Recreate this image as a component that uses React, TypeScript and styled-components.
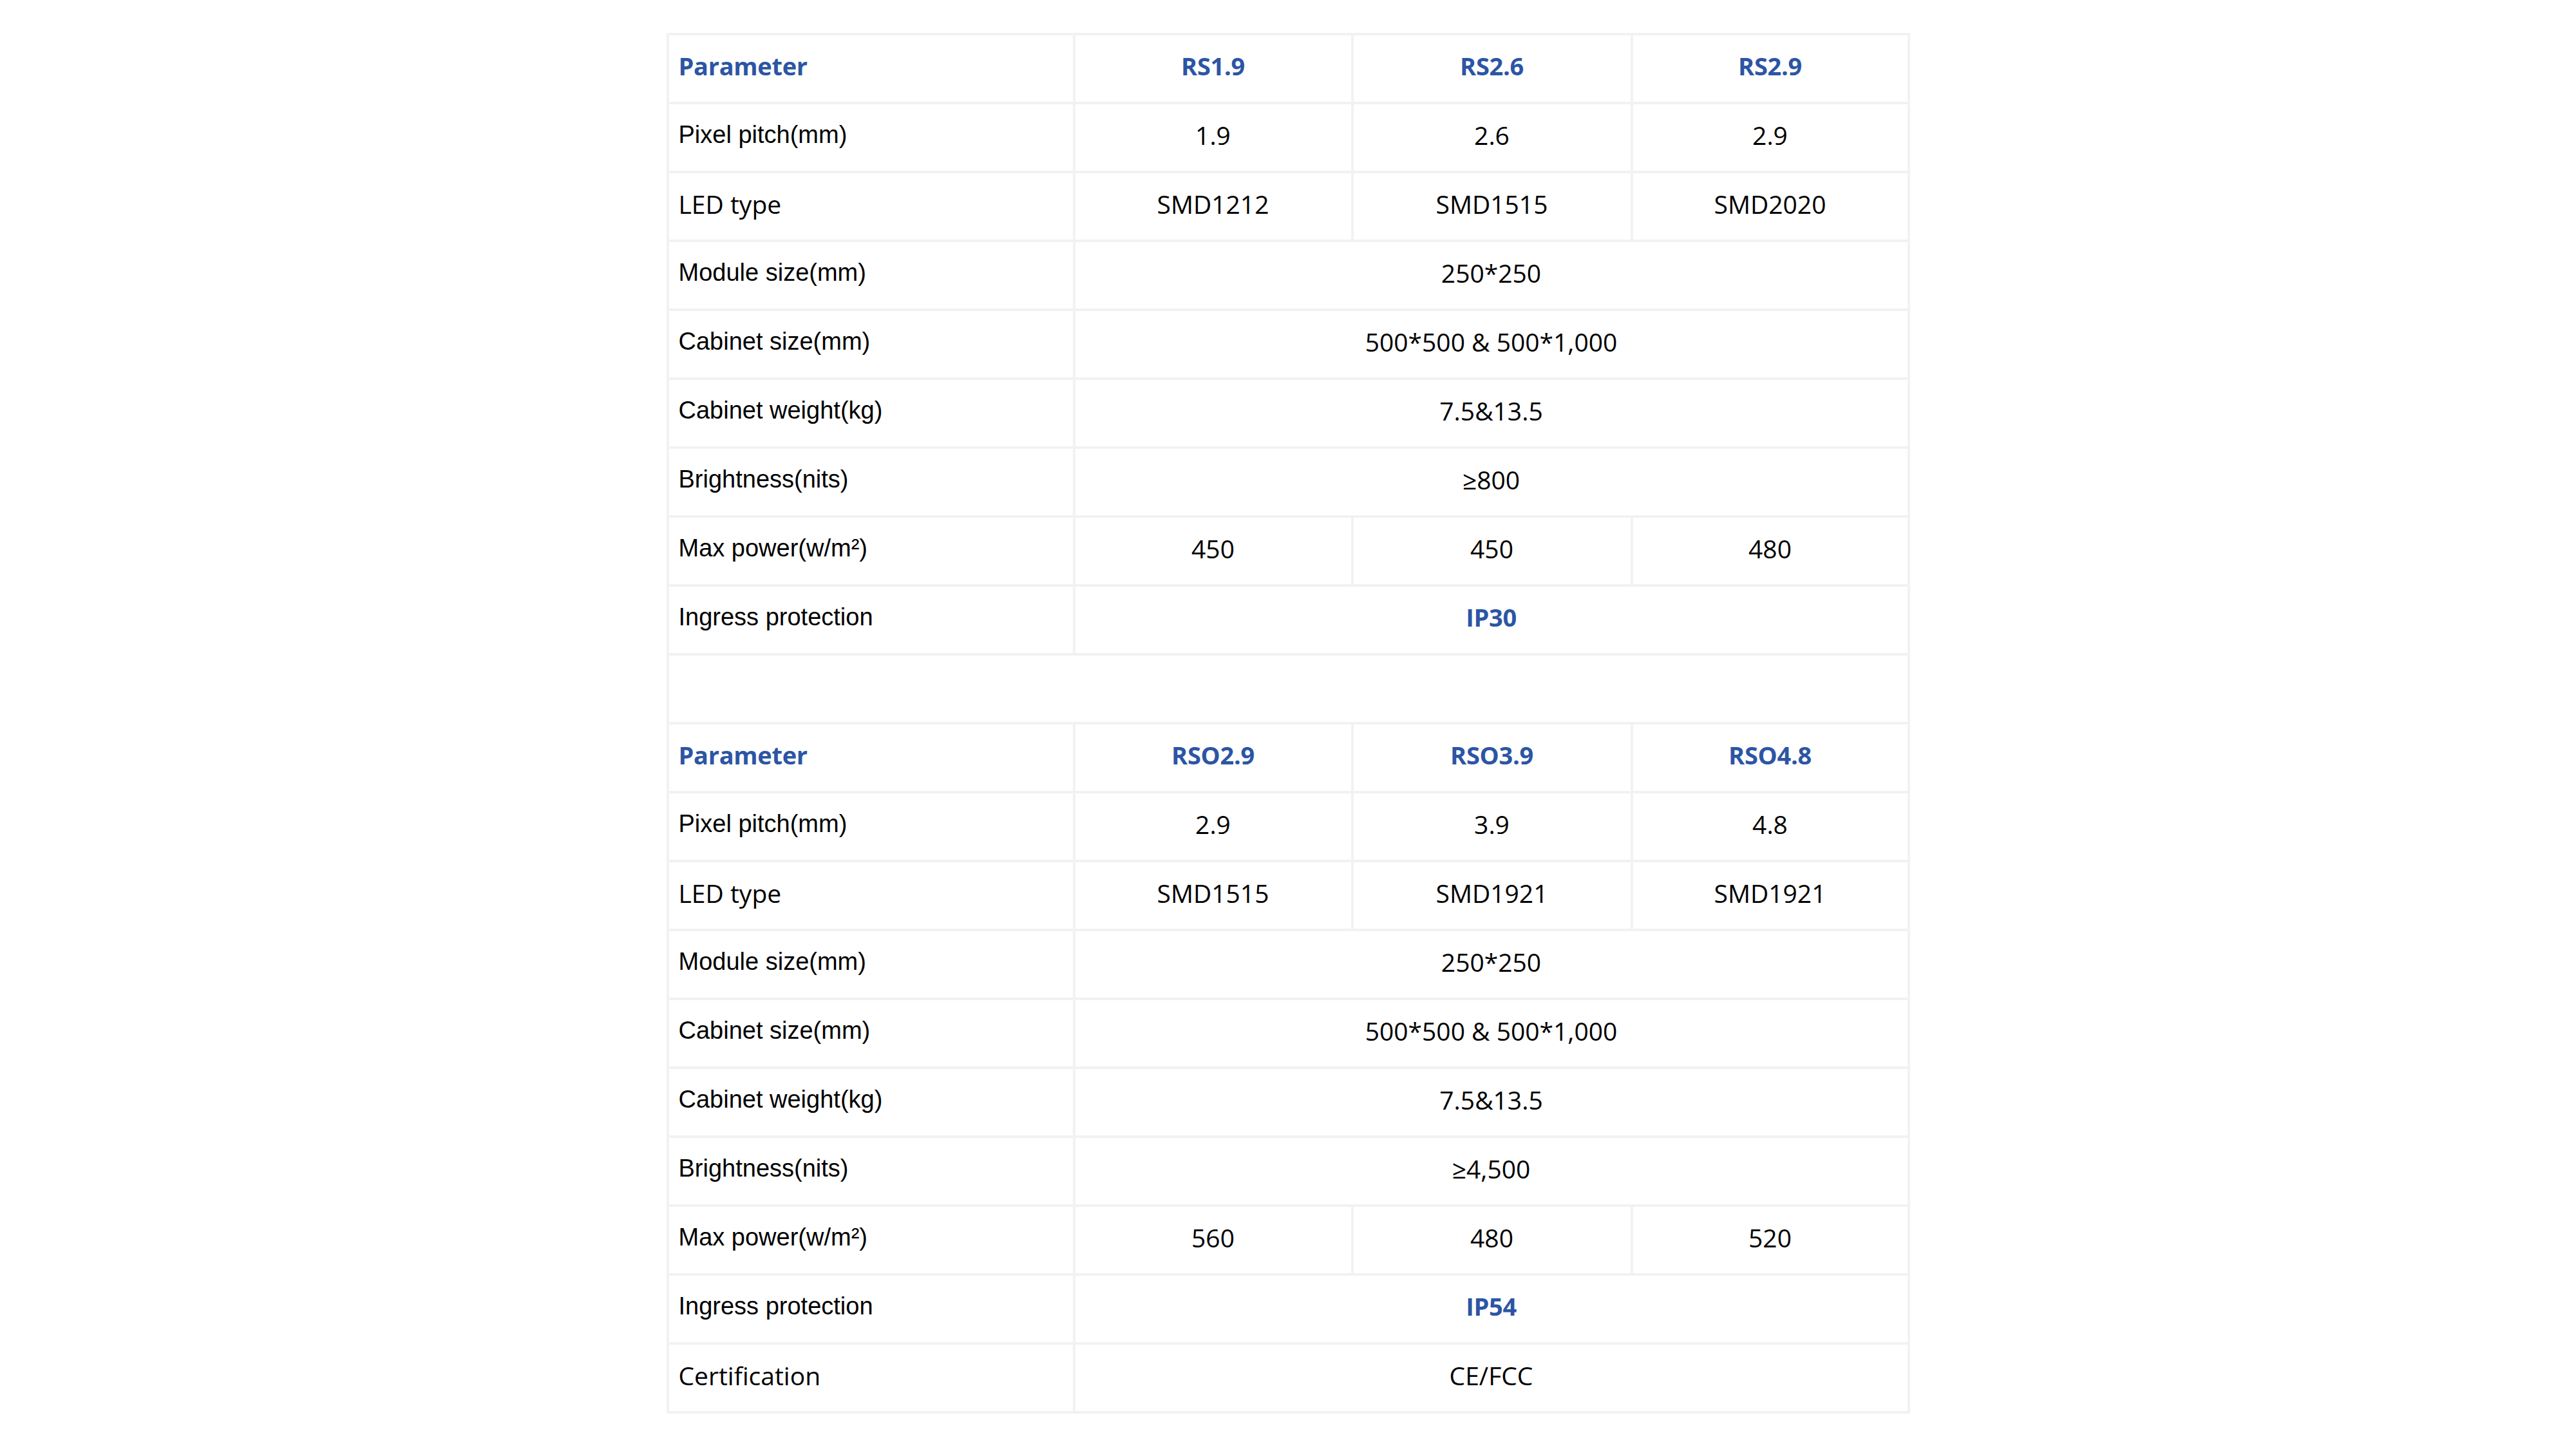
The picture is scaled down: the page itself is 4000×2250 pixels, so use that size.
import React from 'react';
import styled, { createGlobalStyle } from 'styled-components';

const GlobalStyle = createGlobalStyle`
  html, body {
    margin: 0;
    padding: 0;
    background: #ffffff;
  }
`;

const Page = styled.main`
  display: flex;
  justify-content: center;
  align-items: flex-start;
  box-sizing: border-box;
  min-height: 2250px;
  padding-top: 51px;
  background: #ffffff;
`;

const SpecTable = styled.table`
  border-collapse: collapse;
  table-layout: fixed;
  width: 1927px;
`;

const Col = styled.col<{ $w: number }>`
  width: ${(p) => p.$w}px;
`;

const Row = styled.tr`
  height: 107px;
`;

type Font = 'arial' | 'segoe';

const Cell = styled.td<{ $center?: boolean; $font?: Font; $accent?: boolean }>`
  border: 4px solid #f2f2f2;
  padding: 0 15px 7px;
  vertical-align: middle;
  text-align: ${(p) => (p.$center ? 'center' : 'left')};
  font-family: ${(p) =>
    p.$font === 'arial'
      ? '"Liberation Sans", Arial, sans-serif'
      : '"Open Sans", "Noto Sans", sans-serif'};
  font-size: ${(p) => (p.$font === 'arial' ? '38px' : p.$accent ? '38px' : '39px')};
  font-weight: ${(p) => (p.$accent ? 700 : 400)};
  letter-spacing: ${(p) => (p.$accent ? '-0.3px' : '0')};
  color: ${(p) => (p.$accent ? '#2c55a4' : '#000000')};
  white-space: nowrap;
  line-height: 1.2;
`;

type SpecRow = {
  label: string;
  font: Font;
  values: string[];
  accent?: boolean;
};

type Section = {
  models: string[];
  rows: SpecRow[];
};

const sections: Section[] = [
  {
    models: ['RS1.9', 'RS2.6', 'RS2.9'],
    rows: [
      { label: 'Pixel pitch(mm)', font: 'arial', values: ['1.9', '2.6', '2.9'] },
      { label: 'LED type', font: 'segoe', values: ['SMD1212', 'SMD1515', 'SMD2020'] },
      { label: 'Module size(mm)', font: 'arial', values: ['250*250'] },
      { label: 'Cabinet size(mm)', font: 'arial', values: ['500*500 & 500*1,000'] },
      { label: 'Cabinet weight(kg)', font: 'arial', values: ['7.5&13.5'] },
      { label: 'Brightness(nits)', font: 'arial', values: ['≥800'] },
      { label: 'Max power(w/m²)', font: 'arial', values: ['450', '450', '480'] },
      { label: 'Ingress protection', font: 'arial', values: ['IP30'], accent: true },
    ],
  },
  {
    models: ['RSO2.9', 'RSO3.9', 'RSO4.8'],
    rows: [
      { label: 'Pixel pitch(mm)', font: 'arial', values: ['2.9', '3.9', '4.8'] },
      { label: 'LED type', font: 'segoe', values: ['SMD1515', 'SMD1921', 'SMD1921'] },
      { label: 'Module size(mm)', font: 'arial', values: ['250*250'] },
      { label: 'Cabinet size(mm)', font: 'arial', values: ['500*500 & 500*1,000'] },
      { label: 'Cabinet weight(kg)', font: 'arial', values: ['7.5&13.5'] },
      { label: 'Brightness(nits)', font: 'arial', values: ['≥4,500'] },
      { label: 'Max power(w/m²)', font: 'arial', values: ['560', '480', '520'] },
      { label: 'Ingress protection', font: 'arial', values: ['IP54'], accent: true },
      { label: 'Certification', font: 'segoe', values: ['CE/FCC'] },
    ],
  },
];

function SectionRows({ section }: { section: Section }) {
  return (
    <>
      <Row>
        <Cell $font="segoe" $accent>
          Parameter
        </Cell>
        {section.models.map((m) => (
          <Cell key={m} $font="segoe" $accent $center>
            {m}
          </Cell>
        ))}
      </Row>
      {section.rows.map((r) => (
        <Row key={r.label}>
          <Cell $font={r.font}>{r.label}</Cell>
          {r.values.length === 1 ? (
            <Cell colSpan={3} $font="segoe" $center $accent={r.accent}>
              {r.values[0]}
            </Cell>
          ) : (
            r.values.map((v, i) => (
              <Cell key={i} $font="segoe" $center $accent={r.accent}>
                {v}
              </Cell>
            ))
          )}
        </Row>
      ))}
    </>
  );
}

export default function App() {
  return (
    <>
      <GlobalStyle />
      <Page>
        <SpecTable>
          <colgroup>
            <Col $w={631} />
            <Col $w={432} />
            <Col $w={434} />
            <Col $w={430} />
          </colgroup>
          <tbody>
            <SectionRows section={sections[0]} />
            <Row>
              <Cell colSpan={4} />
            </Row>
            <SectionRows section={sections[1]} />
          </tbody>
        </SpecTable>
      </Page>
    </>
  );
}
